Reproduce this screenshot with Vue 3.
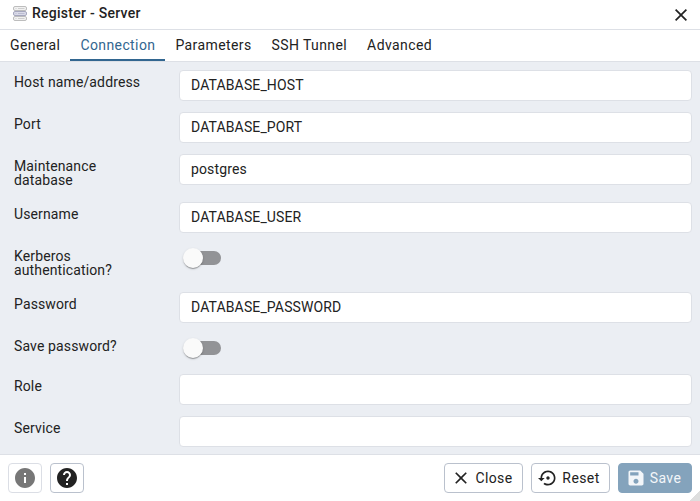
<script setup>
import { ref } from 'vue'

const tabs = ['General', 'Connection', 'Parameters', 'SSH Tunnel', 'Advanced']
const active = ref('Connection')
const fields = ref([
  { label: 'Host name/address', type: 'text', value: 'DATABASE_HOST' },
  { label: 'Port', type: 'text', value: 'DATABASE_PORT' },
  { label: 'Maintenance database', type: 'text', value: 'postgres', tall: true },
  { label: 'Username', type: 'text', value: 'DATABASE_USER' },
  { label: 'Kerberos authentication?', type: 'switch', tall: true },
  { label: 'Password', type: 'text', value: 'DATABASE_PASSWORD' },
  { label: 'Save password?', type: 'switch' },
  { label: 'Role', type: 'text', value: '' },
  { label: 'Service', type: 'text', value: '' },
])
</script>

<template>
  <div class="dialog">
    <header class="title-bar">
      <svg class="server" viewBox="0 0 14 15">
        <rect x="0.5" y="0.5" width="13" height="4" rx="1.5" fill="#f1f1f1" stroke="#bdbdbd" />
        <rect x="0.5" y="10.5" width="13" height="4" rx="1.5" fill="#f1f1f1" stroke="#bdbdbd" />
        <rect x="0.5" y="5.5" width="13" height="4" rx="1.5" fill="#d9dae8" stroke="#a6a7be" />
        <path d="M2.500 2.500h1M5 2.500h6.500M2.500 12.500h1M5 12.500h6.500" stroke="#cfcfcf" />
        <path d="M2.500 7.500h1M5 7.500h6.500" stroke="#bcbdd2" />
      </svg>
      <span class="title">Register - Server</span>
      <svg class="x" viewBox="5 5 14 14"><path d="M19 6.410 17.590 5 12 10.590 6.410 5 5 6.410 10.590 12 5 17.590 6.410 19 12 13.410 17.590 19 19 17.590 13.410 12z" /></svg>
    </header>
    <nav class="tabs">
      <button v-for="t in tabs" :key="t" class="tab" :class="{ active: t === active }" @click="active = t">{{ t }}</button>
    </nav>
    <main class="form">
      <div v-for="f in fields" :key="f.label" class="row" :class="[f.type, { tall: f.tall }]">
        <label class="label">{{ f.label }}</label>
        <input v-if="f.type === 'text'" v-model="f.value" class="input" spellcheck="false" />
        <span v-else class="switch-track"><span class="thumb"></span></span>
      </div>
    </main>
    <footer class="footer">
      <button class="btn icon muted">
        <svg viewBox="0 0 24 24"><path d="M12 2C6.480 2 2 6.480 2 12s4.480 10 10 10 10-4.480 10-10S17.520 2 12 2m1 15h-2v-6h2zm0-8h-2V7h2z" /></svg>
      </button>
      <button class="btn icon">
        <svg viewBox="0 0 24 24"><path d="M12 2C6.480 2 2 6.480 2 12s4.480 10 10 10 10-4.480 10-10S17.520 2 12 2m1 17h-2v-2h2zm2.070-7.750-.9.920C13.450 12.900 13 13.500 13 15h-2v-.5c0-1.100.45-2.100 1.170-2.830l1.240-1.260c.37-.36.59-.86.59-1.410 0-1.100-.9-2-2-2s-2 .9-2 2H8c0-2.210 1.790-4 4-4s4 1.790 4 4c0 .88-.36 1.680-.93 2.250" /></svg>
      </button>
      <span class="spacer"></span>
      <button class="btn close">
        <svg viewBox="0 0 24 24"><path d="M19 6.410 17.590 5 12 10.590 6.410 5 5 6.410 10.590 12 5 17.590 6.410 19 12 13.410 17.590 19 19 17.590 13.410 12z" /></svg>Close
      </button>
      <button class="btn reset">
        <svg viewBox="0 0 24 24"><path d="M14 12c0-1.100-.9-2-2-2s-2 .9-2 2 .9 2 2 2 2-.9 2-2m-2-9c-4.970 0-9 4.030-9 9H0l4 4 4-4H5c0-3.870 3.130-7 7-7s7 3.130 7 7-3.130 7-7 7c-1.510 0-2.910-.49-4.060-1.300l-1.420 1.440C8.040 20.300 9.940 21 12 21c4.970 0 9-4.030 9-9s-4.030-9-9-9" /></svg>Reset
      </button>
      <button class="btn save">
        <svg viewBox="0 0 24 24"><path d="M17 3H5c-1.110 0-2 .9-2 2v14c0 1.100.89 2 2 2h14c1.100 0 2-.9 2-2V7zm-5 16c-1.660 0-3-1.340-3-3s1.340-3 3-3 3 1.340 3 3-1.340 3-3 3m3-10H5V5h10z" /></svg>Save
      </button>
      <span class="grip"></span>
    </footer>
  </div>
</template>

<style>
body {
  margin: 0;
  background: #fff;
}
</style>

<style scoped>
.dialog {
  box-sizing: border-box;
  width: 700px;
  height: 501px;
  display: flex;
  flex-direction: column;
  overflow: hidden;
  background: #fff;
  color: #222;
  font: 14px/1 Roboto, sans-serif;
}
.title-bar {
  box-sizing: border-box;
  height: 30px;
  flex: none;
  display: flex;
  align-items: center;
  padding: 0 13px 3px;
  border-bottom: 1px solid #dde0e6;
}
.server {
  width: 14px;
  height: 15px;
  margin-top: 1px;
}
.title {
  flex: 1;
  margin-left: 5px;
  font-weight: 500;
  letter-spacing: 0.26px;
}
.x {
  width: 12px;
  height: 12px;
  fill: #222;
  margin: 3px 0 0;
}
.tabs {
  box-sizing: border-box;
  height: 32px;
  flex: none;
  display: flex;
  border-bottom: 1px solid #dde0e6;
}
.tab {
  border: 0;
  border-bottom: 2px solid transparent;
  padding: 0 10px;
  background: none;
  font: 14px/1 Roboto, sans-serif;
  letter-spacing: 0.4px;
  color: #222;
}
.tab.active {
  color: #326690;
  border-color: #326690;
}
.form {
  box-sizing: border-box;
  height: 393px;
  flex: none;
  padding: 8px 8px 0 14px;
  background: #ebeef3;
  border-bottom: 1px solid #dde0e6;
}
.row {
  height: 42px;
  display: flex;
  align-items: flex-start;
}
.row.switch {
  height: 40px;
}
.row.tall {
  height: 48px;
}
.label {
  box-sizing: border-box;
  flex: none;
  width: 165px;
  padding: 5px 30px 0 0;
  letter-spacing: 0.13px;
}
.input {
  box-sizing: border-box;
  flex: 1;
  min-width: 0;
  height: 31px;
  padding: 0 11px 2px;
  border: 1px solid #dde0e6;
  border-radius: 4px;
  background: #fff;
  color: #222;
  font: 14px/1 Roboto, sans-serif;
  letter-spacing: 0.13px;
  outline: 0;
}
.switch-track {
  display: flex;
  align-items: center;
  width: 34px;
  height: 14px;
  margin: 7px 0 0 8px;
  border-radius: 7px;
  background: #929396;
}
.thumb {
  width: 20px;
  height: 20px;
  flex: none;
  margin-left: -4px;
  border-radius: 50%;
  background: #fafafa;
  box-shadow: 0 2px 1px -1px rgba(0, 0, 0, 0.2), 0 1px 1px rgba(0, 0, 0, 0.14), 0 1px 3px rgba(0, 0, 0, 0.12);
}
.footer {
  position: relative;
  flex: 1;
  display: flex;
  align-items: center;
  gap: 8px;
  padding: 0 8px;
}
.btn {
  box-sizing: border-box;
  height: 30px;
  display: flex;
  align-items: center;
  justify-content: center;
  gap: 4px;
  padding: 0;
  border: 1px solid #bac1cd;
  border-radius: 4px;
  background: #fff;
  color: #222;
  font: 14px/1 Roboto, sans-serif;
  letter-spacing: 0.4px;
}
.btn svg {
  width: 20px;
  height: 20px;
  fill: currentColor;
}
.btn.icon {
  width: 34px;
}
.btn.icon svg {
  width: 24px;
  height: 24px;
}
.btn.muted {
  border-color: #dbdee5;
  color: #777;
}
.spacer {
  flex: 1;
}
.btn.close,
.btn.reset {
  width: 79px;
  padding-right: 3px;
}
.btn.save {
  width: 74px;
  padding-right: 3px;
  background: #84a3bc;
  border-color: #84a3bc;
  color: #f3f6f9;
}
.grip {
  position: absolute;
  right: 0;
  bottom: 0;
  width: 11px;
  height: 11px;
  background: linear-gradient(135deg, transparent 50%, #dedede 50%);
}
</style>
